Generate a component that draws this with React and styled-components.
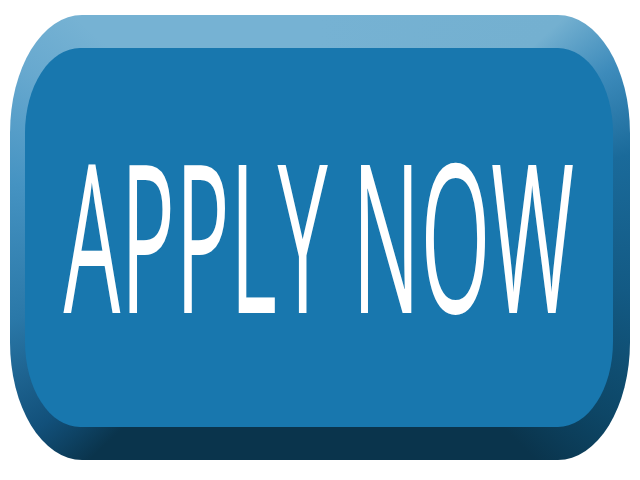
import React from "react";
import styled, { createGlobalStyle } from "styled-components";

const GlobalStyle = createGlobalStyle`
  html, body {
    margin: 0;
    padding: 0;
    background: #ffffff;
  }
`;

function App() {
  return (
    <>
      <GlobalStyle />
      <Page>
        <ApplyButton type="button">
          <Face>
            <Label>APPLY NOW</Label>
          </Face>
        </ApplyButton>
      </Page>
    </>
  );
}

export default App;

const Page = styled.div`
  width: 640px;
  height: 480px;
  box-sizing: border-box;
  padding: 15px 10px 20px 10px;
  display: flex;
  background: #ffffff;
  overflow: hidden;
`;

const ApplyButton = styled.button`
  flex: 1;
  display: flex;
  box-sizing: border-box;
  margin: 0;
  padding: 33px 17px 33px 15px;
  border: none;
  border-radius: 72px / 118px;
  cursor: pointer;
  background: conic-gradient(
    from 0deg at 50% 50%,
    #76b2d3 0deg,
    #74b0d0 48deg,
    #3d8bbb 60deg,
    #1a6a9a 75deg,
    #135a84 100deg,
    #0d4666 122deg,
    #0a344c 136deg,
    #0a344c 226deg,
    #12507a 236deg,
    #2a78a8 255deg,
    #4593c2 280deg,
    #68a9cf 300deg,
    #76b2d3 312deg,
    #76b2d3 360deg
  );
`;

const Face = styled.div`
  flex: 1;
  display: flex;
  align-items: center;
  justify-content: center;
  background: #1877ae;
  border-radius: 55px / 85px;
`;

const Label = styled.span`
  display: inline-block;
  font-family: "Open Sans", "DejaVu Sans", sans-serif;
  font-weight: 500;
  font-size: 90px;
  line-height: 0.714;
  letter-spacing: 0.5px;
  color: #ffffff;
  white-space: nowrap;
  transform: translate(0, -4px) scaleY(2.3);
`;
